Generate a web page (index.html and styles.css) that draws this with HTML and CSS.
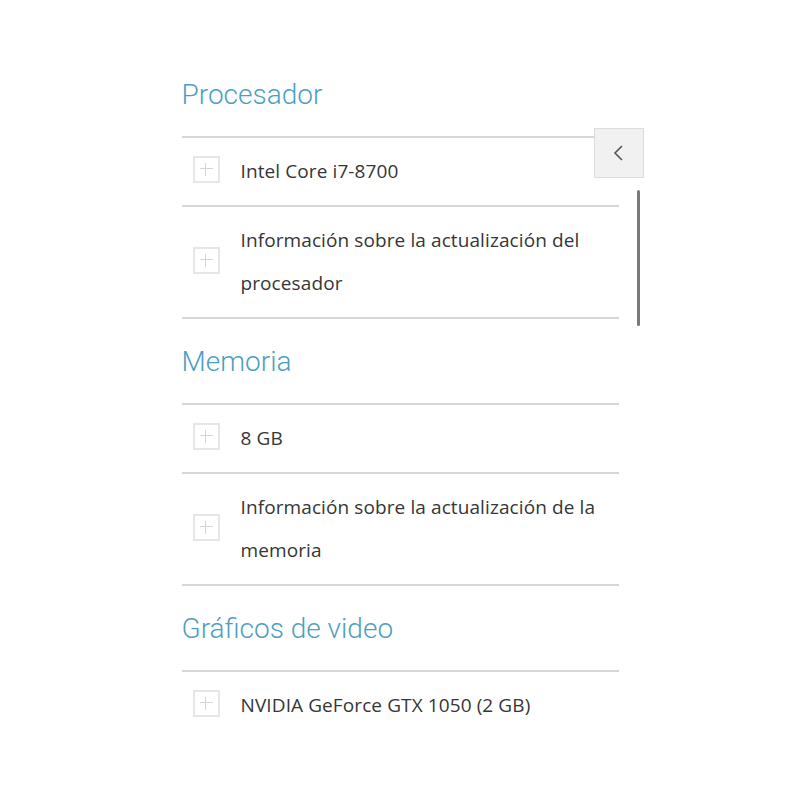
FILE: index.html
```html
<!DOCTYPE html>
<html lang="es">
<head>
<meta charset="utf-8">
<title>Especificaciones</title>
<link rel="stylesheet" href="styles.css">
</head>
<body>
<main class="specs">
  <section class="section">
    <h2 class="heading">Procesador</h2>
    <ul class="list">
      <li class="item"><span class="box"></span><span class="label">Intel Core i7-8700</span></li>
      <li class="item"><span class="box"></span><span class="label">Información sobre la actualización del procesador</span></li>
    </ul>
  </section>
  <section class="section">
    <h2 class="heading">Memoria</h2>
    <ul class="list">
      <li class="item"><span class="box"></span><span class="label">8 GB</span></li>
      <li class="item"><span class="box"></span><span class="label">Información sobre la actualización de la memoria</span></li>
    </ul>
  </section>
  <section class="section">
    <h2 class="heading">Gráficos de video</h2>
    <ul class="list">
      <li class="item last"><span class="box"></span><span class="label">NVIDIA GeForce GTX 1050 (2 GB)</span></li>
    </ul>
  </section>
  <button class="tab" aria-label="Abrir">
    <svg width="14" height="20" viewBox="0 0 14 20"><path d="M10 3 L3 10 L10 17" fill="none" stroke="#555" stroke-width="1.6"/></svg>
  </button>
  <div class="scrollbar"></div>
</main>
</body>
</html>
```
FILE: styles.css
```css
html, body {
  margin: 0;
  padding: 0;
  background: #fff;
}
body {
  font-family: "Open Sans", Roboto, sans-serif;
  color: #363636;
}
.specs {
  position: relative;
  width: 437px;
  margin: 0 auto;
  padding-top: 52px;
}
.heading {
  margin: 0;
  height: 84px;
  box-sizing: border-box;
  padding-top: 25px;
  font-family: Roboto, sans-serif;
  font-size: 28px;
  line-height: 36px;
  font-weight: 300;
  color: #4d9fc2;
}
.list {
  list-style: none;
  margin: 0;
  padding: 0;
  border-top: 2px solid #d6d6d6;
}
.item {
  display: flex;
  align-items: center;
  padding: 12px 0;
  border-bottom: 2px solid #d6d6d6;
}
.item.last {
  border-bottom: none;
}
.box {
  flex: none;
  position: relative;
  width: 27px;
  height: 27px;
  box-sizing: border-box;
  border: 2px solid #e6e6e6;
  margin-left: 11px;
  margin-right: 21px;
  margin-top: -4px;
}
.box::before, .box::after {
  content: "";
  position: absolute;
  background: #d4d4d4;
}
.box::before {
  left: 5px;
  right: 5px;
  top: 10px;
  height: 1px;
}
.box::after {
  top: 5px;
  bottom: 5px;
  left: 10px;
  width: 1px;
}
.label {
  font-size: 19px;
  letter-spacing: 0.1px;
  line-height: 43px;
  padding-right: 8px;
}
.tab {
  position: absolute;
  left: 412px;
  top: 128px;
  width: 50px;
  height: 50px;
  padding: 0;
  border: 1px solid #dcdcdc;
  background: #f1f1f1;
  display: flex;
  align-items: center;
  justify-content: center;
}
.scrollbar {
  position: absolute;
  left: 455px;
  top: 190px;
  width: 3px;
  height: 136px;
  background: #7a7a7a;
  border-radius: 2px;
}
```
